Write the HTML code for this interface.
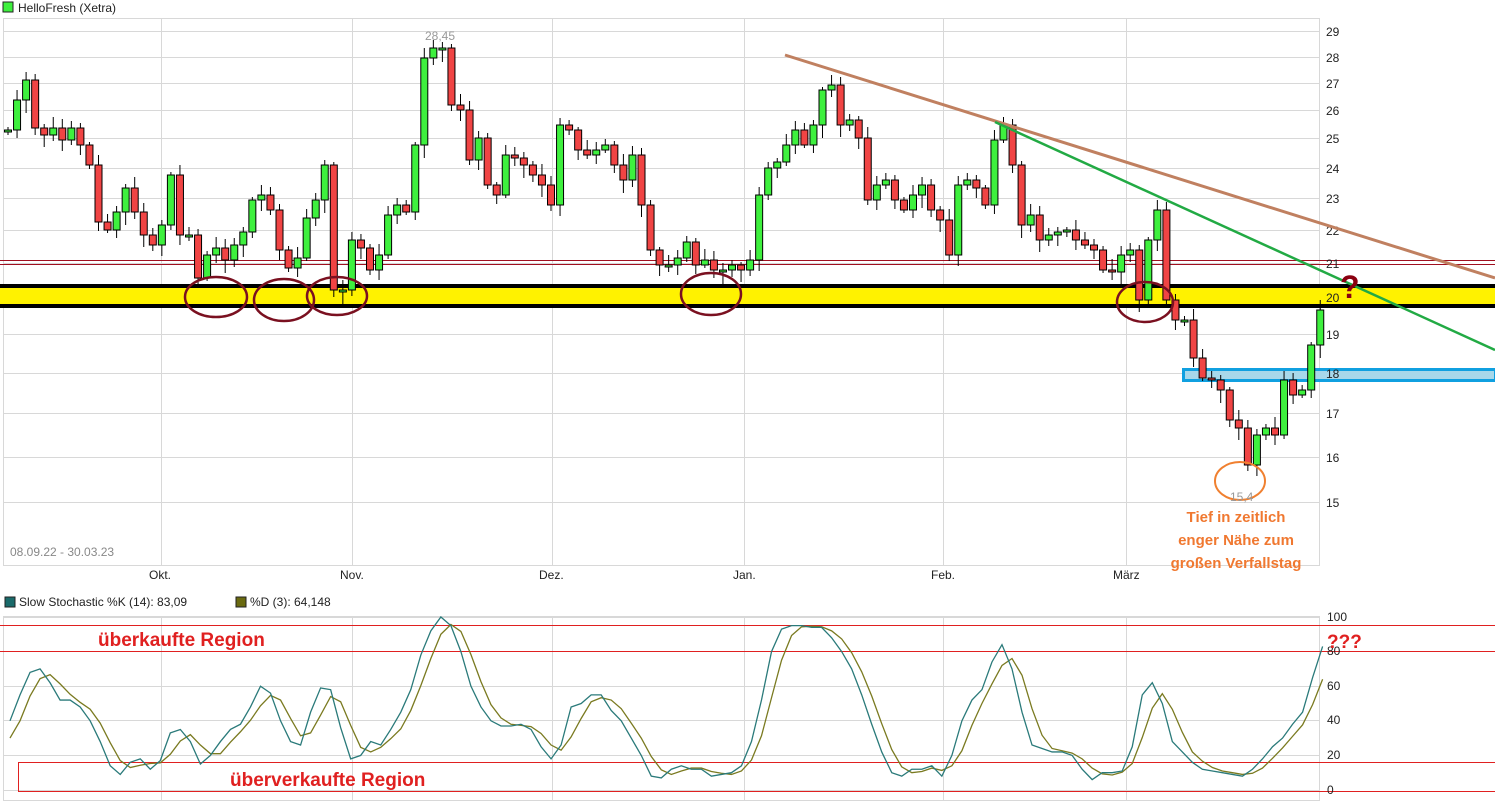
<!DOCTYPE html>
<html><head><meta charset="utf-8"><style>
body{margin:0;background:#fff;width:1495px;height:804px;overflow:hidden;font-family:"Liberation Sans",sans-serif}
svg{display:block}
</style></head><body>
<svg id="s" width="1495" height="804" xmlns="http://www.w3.org/2000/svg" font-family="Liberation Sans, sans-serif">
<rect x="3" y="2" width="10" height="10" fill="#3ef03e" stroke="#222" stroke-width="1"/>
<text x="18" y="12" font-size="12" fill="#222">HelloFresh (Xetra)</text>
<g id="grid" stroke="#d8d8d8" stroke-width="1"></g>
<rect x="3.5" y="18.5" width="1316" height="547" fill="none" stroke="#d8d8d8"/>
<g font-size="12" fill="#222">
<text x="149" y="579">Okt.</text><text x="340" y="579">Nov.</text><text x="539" y="579">Dez.</text><text x="733" y="579">Jan.</text><text x="931" y="579">Feb.</text><text x="1113" y="579">März</text>
</g>
<text x="10" y="556" font-size="12" fill="#888">08.09.22 - 30.03.23</text>
<!-- band -->
<rect x="0" y="288" width="1495" height="16" fill="#fff200"/>
<rect x="0" y="284" width="1495" height="4" fill="#000"/>
<rect x="0" y="304" width="1495" height="4" fill="#000"/>
<line x1="0" y1="260.5" x2="1495" y2="260.5" stroke="#a01020"/>
<line x1="0" y1="264.5" x2="1495" y2="264.5" stroke="#a01020"/>
<rect x="1183.5" y="369.5" width="312" height="11" fill="#a8d8ea" stroke="#10a0e0" stroke-width="3"/>
<g font-size="12" fill="#222" id="ax"></g>
<g id="c"></g>
<line x1="785" y1="55" x2="1495" y2="278" stroke="#c08060" stroke-width="3"/>
<line x1="995" y1="122" x2="1495" y2="350" stroke="#22aa44" stroke-width="2.5"/>
<g fill="none" stroke="#7a1020" stroke-width="2.5">
<ellipse cx="216" cy="297" rx="31" ry="20"/><ellipse cx="284" cy="300" rx="30" ry="21"/><ellipse cx="337" cy="296" rx="30" ry="19"/><ellipse cx="711" cy="294" rx="30" ry="21"/><ellipse cx="1145" cy="302" rx="28" ry="20"/>
</g>
<ellipse cx="1240" cy="481" rx="25" ry="19" fill="none" stroke="#f08030" stroke-width="2"/>
<text x="1340" y="298" font-size="32" font-weight="bold" fill="#8a0010">?</text>
<text x="425" y="40" font-size="12" fill="#999">28,45</text>
<text x="1230" y="501" font-size="12" fill="#999">15,4</text>
<g font-size="15" font-weight="bold" fill="#f07830" text-anchor="middle">
<text x="1236" y="522">Tief in zeitlich</text><text x="1236" y="545">enger Nähe zum</text><text x="1236" y="568">großen Verfallstag</text>
</g>
<!-- lower -->
<rect x="5" y="597" width="10" height="10" fill="#1a6a6a" stroke="#222"/>
<text x="19" y="606" font-size="12" fill="#222">Slow Stochastic %K (14): 83,09</text>
<rect x="236" y="597" width="10" height="10" fill="#6a6a10" stroke="#222"/>
<text x="250" y="606" font-size="12" fill="#222">%D (3): 64,148</text>
<g id="g2" stroke="#d8d8d8"></g>
<rect x="3.5" y="616.5" width="1316" height="184" fill="none" stroke="#d8d8d8"/>
<line x1="0" y1="625.5" x2="1495" y2="625.5" stroke="#e02020"/>
<line x1="0" y1="651.5" x2="1495" y2="651.5" stroke="#e02020"/>
<rect x="18.5" y="762.5" width="1480" height="29" fill="none" stroke="#e02020"/>
<g font-size="12" fill="#222">
<text x="1327" y="621">100</text><text x="1327" y="655">80</text><text x="1327" y="690">60</text><text x="1327" y="724">40</text><text x="1327" y="759">20</text><text x="1327" y="794">0</text>
</g>
<polyline id="kd" fill="none" stroke="#7a7a20" stroke-width="1.3"/>
<polyline id="kk" fill="none" stroke="#2a7a7a" stroke-width="1.3"/>
<text x="98" y="646" font-size="19" font-weight="bold" fill="#e02020">überkaufte Region</text>
<text x="230" y="786" font-size="19" font-weight="bold" fill="#e02020">überverkaufte Region</text>
<text x="1327" y="648" font-size="19" font-weight="bold" fill="#e02020">???</text>
</svg>
<script>
var NS="http://www.w3.org/2000/svg";
function el(p,t,a){var e=document.createElementNS(NS,t);for(var k in a)e.setAttribute(k,a[k]);p.appendChild(e);return e;}
var grid=document.getElementById('grid'),ax=document.getElementById('ax');
var lv=[[29,31],[28,57],[27,83],[26,110],[25,138],[24,168],[23,198],[22,230],[21,263],[20,297],[19,334],[18,373],[17,413],[16,457],[15,502]];
lv.forEach(function(l){el(grid,'line',{x1:3,x2:1320,y1:l[1]+.5,y2:l[1]+.5});var t=el(ax,'text',{x:1326,y:l[1]+5});t.textContent=l[0];});
var vx=[161,352,552,744,943,1126];
vx.forEach(function(x){el(grid,'line',{x1:x+.5,x2:x+.5,y1:18,y2:565});});
var g2=document.getElementById('g2');
[617,651,686,720,755,790].forEach(function(y){el(g2,'line',{x1:3,x2:1320,y1:y+.5,y2:y+.5});});
vx.forEach(function(x){el(g2,'line',{x1:x+.5,x2:x+.5,y1:617,y2:800});});
var cl=[130,100,80,128,135,128,140,128,145,165,222,230,212,188,212,235,245,225,175,235,235,278,255,248,260,245,232,200,195,210,250,268,258,218,200,165,290,290,240,248,270,255,215,205,212,145,58,48,48,105,110,160,138,185,195,155,158,165,175,185,205,125,130,150,155,150,145,165,180,155,205,250,265,265,258,242,265,260,270,270,265,270,260,195,168,162,145,130,145,125,90,85,125,120,138,200,185,180,200,210,195,185,210,220,255,185,180,188,205,140,125,165,225,215,240,235,232,230,240,245,250,270,272,255,250,300,240,210,300,320,320,358,378,380,390,420,428,465,435,428,435,380,395,390,345,310];
var c=document.getElementById('c');var prev=130;
cl.forEach(function(v,i){var x=8+i*9.05;var o=prev;if(Math.abs(o-v)<2)o=v+2;
var top=Math.min(o,v),bot=Math.max(o,v);var w1=3+((i*7)%9),w2=3+((i*5)%11);
el(c,'line',{x1:x,x2:x,y1:top-w1,y2:bot+w2,stroke:'#000','stroke-width':1});
el(c,'rect',{x:x-3.5,y:top,width:7,height:bot-top,fill:v<o?'#3ef03e':'#f04444',stroke:'#000','stroke-width':1});prev=v;});
var K=[40,55,68,70,62,52,52,48,40,28,14,9,16,18,12,17,33,35,28,15,20,28,35,38,48,60,56,40,28,26,45,59,58,36,18,20,28,26,35,45,58,78,92,100,95,80,60,48,40,37,37,38,35,25,18,26,48,50,55,55,46,40,30,20,8,7,12,14,12,12,8,9,10,14,28,52,80,93,95,95,94,94,88,80,70,55,38,22,10,8,12,12,14,8,20,40,52,58,74,84,70,45,26,24,22,22,20,12,6,10,10,11,25,55,62,50,28,22,16,12,11,10,9,8,12,18,25,30,38,45,65,83];
function y(v){return 790-v*1.73;}
var pk=[],pd=[];K.forEach(function(v,i){var x=10+i*10.02;pk.push(x+','+y(v));var d=i<2?v*0.8:(K[i]+K[i-1]+K[i-2])/3;pd.push(x+','+y(i<2?30+i*10:d));});
pd[pd.length-1]=(10+(K.length-1)*10.02)+','+y(64);
document.getElementById('kk').setAttribute('points',pk.join(' '));
document.getElementById('kd').setAttribute('points',pd.join(' '));
</script>
</body></html>
